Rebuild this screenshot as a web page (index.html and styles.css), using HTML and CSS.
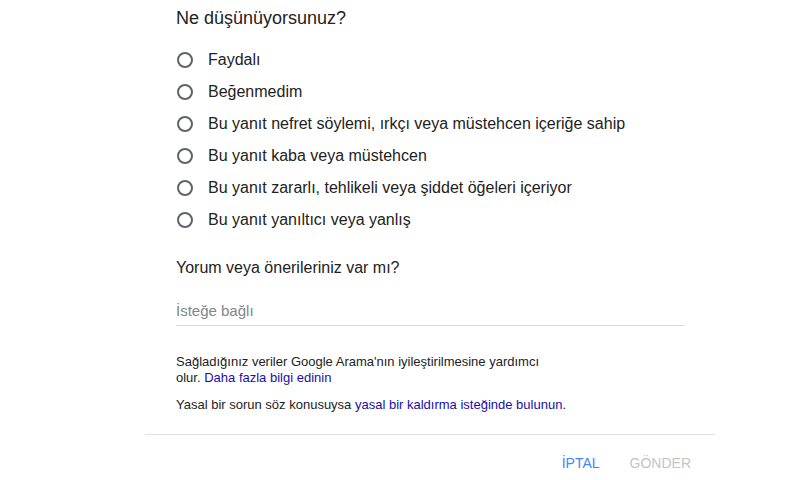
FILE: index.html
```html
<!DOCTYPE html>
<html lang="tr">
<head>
<meta charset="utf-8">
<link rel="stylesheet" href="styles.css">
</head>
<body>
<div class="dialog">
  <div class="content">
    <div class="title">Ne düşünüyorsunuz?</div>
    <div class="options">
      <label class="opt"><span class="radio"></span><span>Faydalı</span></label>
      <label class="opt"><span class="radio"></span><span>Beğenmedim</span></label>
      <label class="opt"><span class="radio"></span><span>Bu yanıt nefret söylemi, ırkçı veya müstehcen içeriğe sahip</span></label>
      <label class="opt"><span class="radio"></span><span>Bu yanıt kaba veya müstehcen</span></label>
      <label class="opt"><span class="radio"></span><span>Bu yanıt zararlı, tehlikeli veya şiddet öğeleri içeriyor</span></label>
      <label class="opt"><span class="radio"></span><span>Bu yanıt yanıltıcı veya yanlış</span></label>
    </div>
    <div class="subtitle">Yorum veya önerileriniz var mı?</div>
    <div class="field">İsteğe bağlı</div>
    <p class="note">Sağladığınız veriler Google Arama'nın iyileştirilmesine yardımcı olur. <a class="link">Daha fazla bilgi edinin</a></p>
    <p class="note legal">Yasal bir sorun söz konusuysa <a class="link">yasal bir kaldırma isteğinde bulunun</a>.</p>
  </div>
  <div class="actions">
    <span class="btn cancel">İPTAL</span>
    <span class="btn send">GÖNDER</span>
  </div>
</div>
</body>
</html>
```
FILE: styles.css
```css
html, body {
  margin: 0;
  padding: 0;
  background: #fff;
  font-family: "Liberation Sans", Arial, sans-serif;
  color: #202124;
}
.dialog {
  width: 570px;
  margin-left: 145px;
}
.content {
  padding: 6px 30px 21px 31px;
  border-bottom: 1px solid #e0e0e0;
}
.title {
  font-size: 18px;
  line-height: 24px;
  color: #222;
}
.options {
  margin-top: 14px;
  display: flex;
  flex-direction: column;
}
.opt {
  display: flex;
  align-items: center;
  height: 32px;
  font-size: 16px;
  color: #222;
}
.radio {
  width: 12px;
  height: 12px;
  border: 2px solid #5f6368;
  border-radius: 50%;
  margin-left: 1px;
  margin-right: 15px;
  flex: none;
}
.subtitle {
  margin-top: 22px;
  font-size: 16px;
  line-height: 20px;
  color: #222;
}
.field {
  margin-top: 23px;
  font-size: 15px;
  color: #80868b;
  line-height: 20px;
  padding-bottom: 4px;
  border-bottom: 1px solid #dadce0;
}
.note {
  margin: 0;
  font-size: 13px;
  line-height: 16px;
  color: #222;
  max-width: 380px;
}
.note:first-of-type { margin-top: 28px; }
.legal { margin-top: 11px; max-width: none; }
.link { color: #1a0dab; text-decoration: none; }
.actions {
  display: flex;
  justify-content: flex-end;
  gap: 30px;
  padding: 20px 24px 0 0;
  font-size: 14px;
  line-height: 16px;
}
.cancel { color: #4285f4; }
.send { color: #c4c4c4; }
```
